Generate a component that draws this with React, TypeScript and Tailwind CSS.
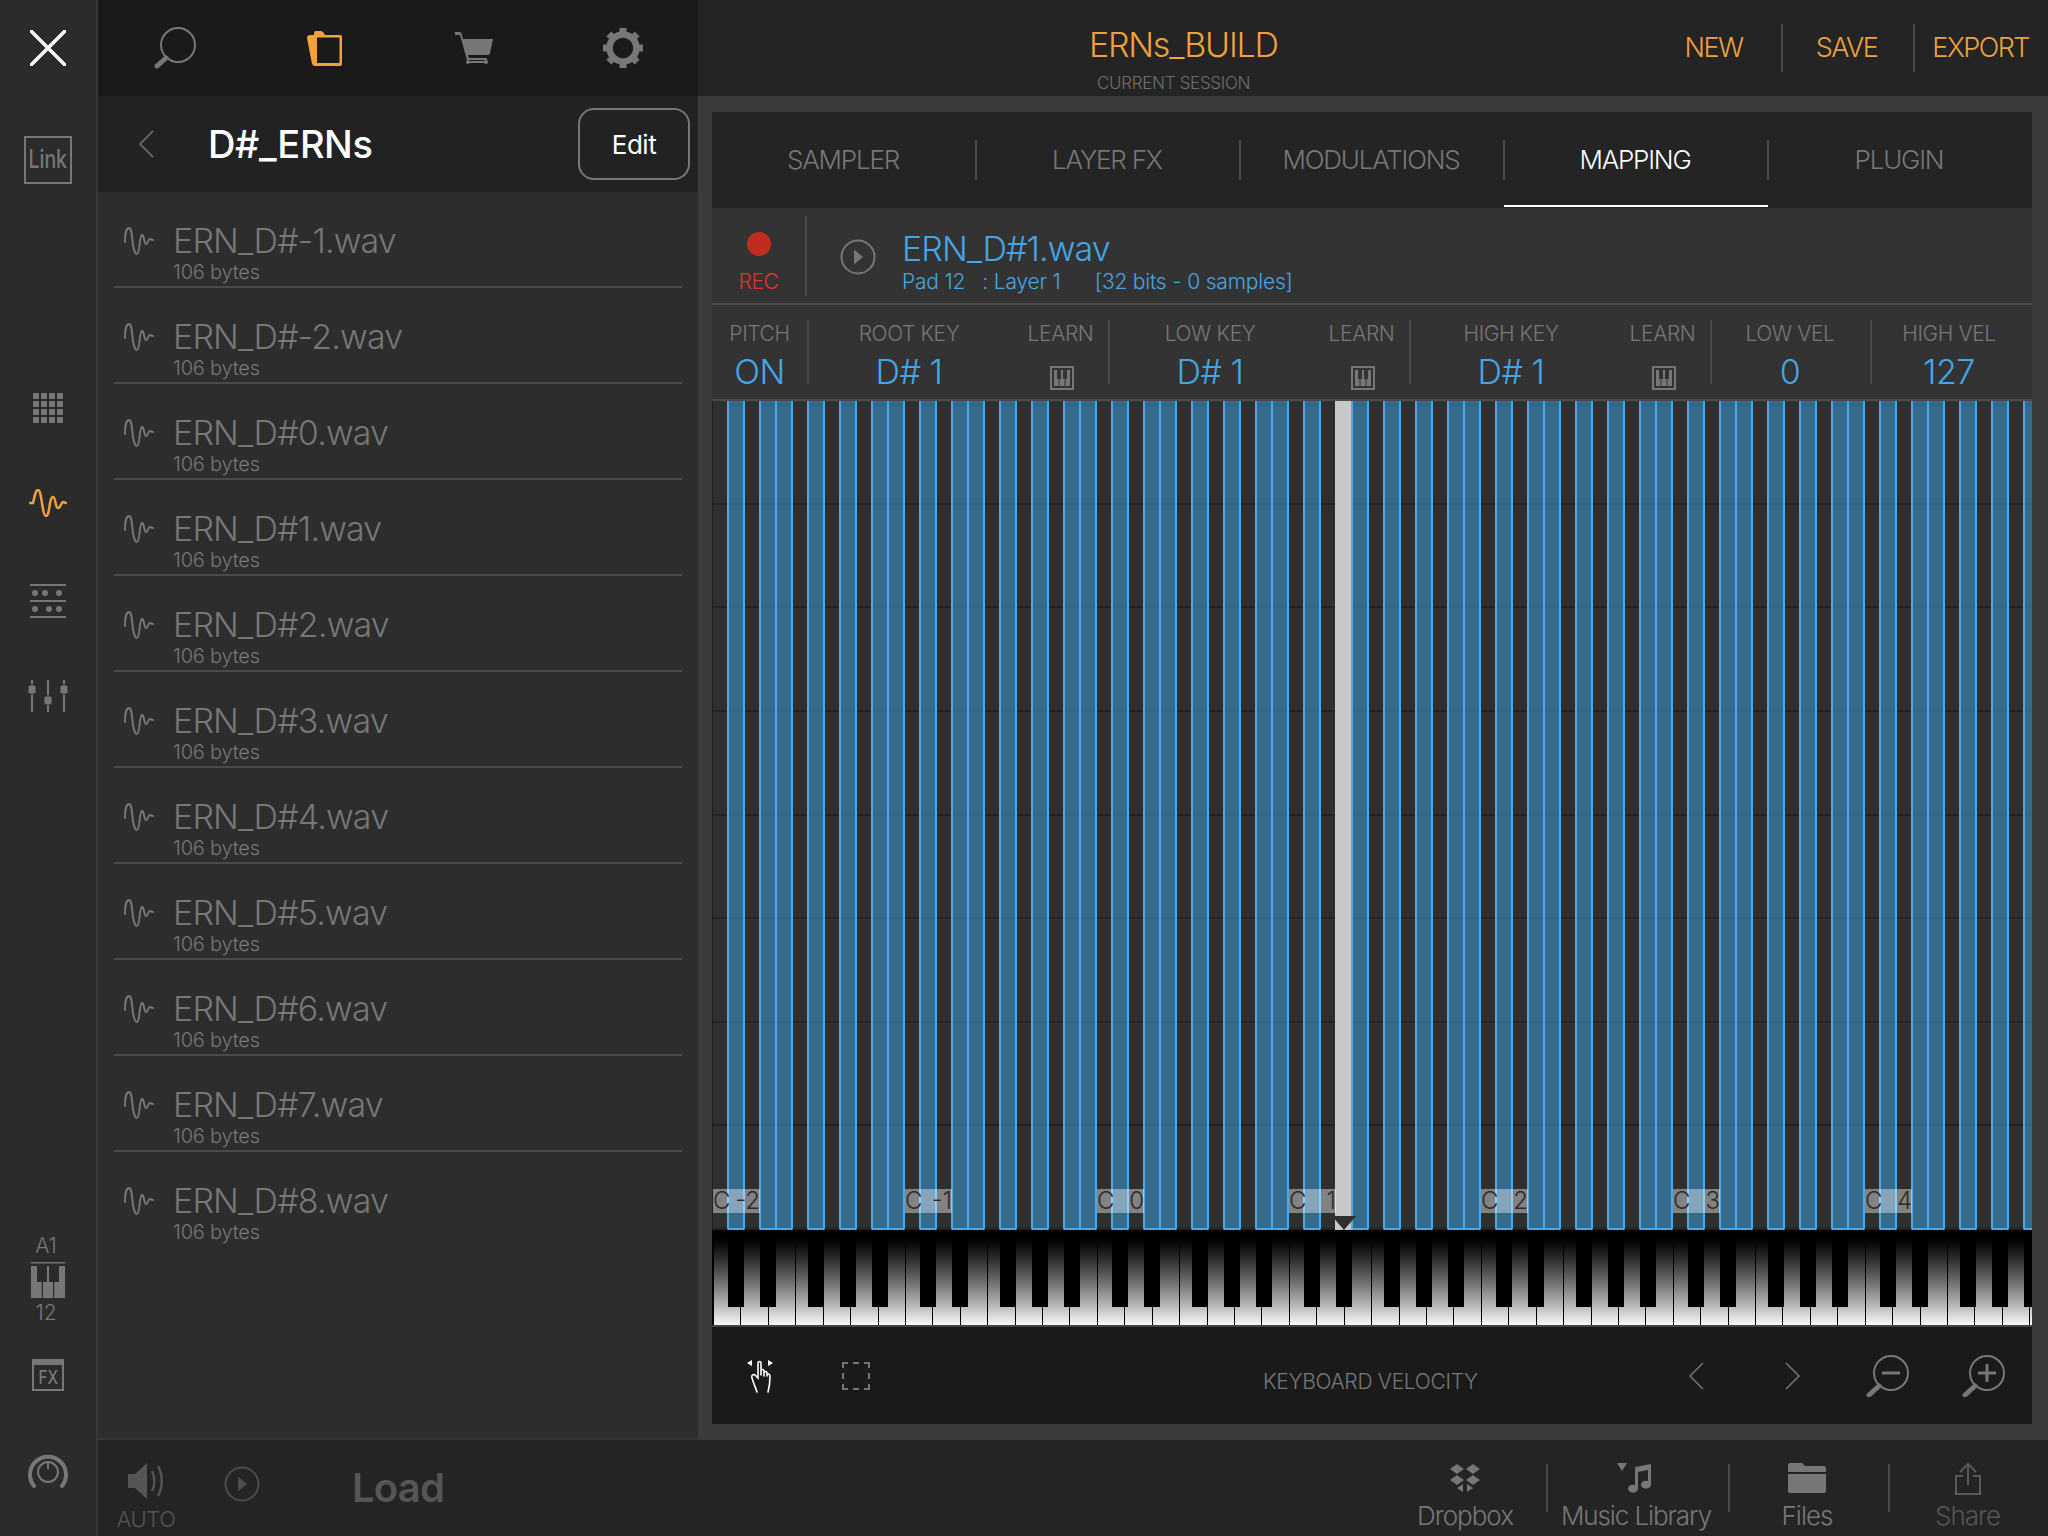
const files = ["ERN_D#-1.wav", "ERN_D#-2.wav", "ERN_D#0.wav", "ERN_D#1.wav", "ERN_D#2.wav", "ERN_D#3.wav", "ERN_D#4.wav", "ERN_D#5.wav", "ERN_D#6.wav", "ERN_D#7.wav", "ERN_D#8.wav"];
const tabs = ["SAMPLER", "LAYER FX", "MODULATIONS", "MAPPING", "PLUGIN"];
const semitones = Array.from({ length: 83 }, (_, i) => i);
const whiteKeys = Array.from({ length: 49 }, (_, i) => i);
const octaves = ["-2", "-1", "0", "1", "2", "3", "4"];
const mapped = [1, 3, 4, 6, 8, 10, 11];
const blacks = [1, 3, 6, 8, 10];

function Wave({ className }: { className: string }) {
  return (
    <svg viewBox="0 0 30 28" fill="none" stroke="currentColor" strokeWidth="2" strokeLinecap="round" className={className}>
      <path d="M1 15C1 5 3 1 5 1C8 1 8 11 9 18C10 24 11 27 13 27C16 27 15 9 18 8C20 7 20 17 22 17C24 17 24 12 26 12C27 12 28 13 29 13" />
    </svg>
  );
}

function MiniKeys({ className }: { className: string }) {
  return (
    <svg viewBox="0 0 24 24" className={className}>
      <rect x="1" y="1" width="22" height="22" fill="none" stroke="#777" strokeWidth="2" />
      <path d="M4 4h16v16H4z" fill="#777" />
      <path d="M7 4h4v9H7zM13 4h4v9h-4z" fill="#333" />
      <path d="M9 13v7M15 13v7" stroke="#333" strokeWidth="1" />
    </svg>
  );
}

function PlayCircle({ color }: { color: string }) {
  return (
    <svg viewBox="0 0 36 36" className="h-9 w-9">
      <circle cx="18" cy="18" r="16.5" fill="none" stroke={color} strokeWidth="2" />
      <path d="M14 10.5l9 7.5-9 7.5z" fill={color} />
    </svg>
  );
}

function Magnifier({ sign }: { sign?: "minus" | "plus" }) {
  return (
    <svg viewBox="0 0 44 42" className="h-[42px] w-11" fill="none">
      <circle cx="25" cy="18" r="17" stroke="#777" strokeWidth="2" />
      {sign && <path d="M16 18h18" stroke="#777" strokeWidth="3" />}
      {sign === "plus" && <path d="M25 9v18" stroke="#777" strokeWidth="3" />}
      <path d="M13 31L3 40" stroke="#777" strokeWidth="5" strokeLinecap="round" />
    </svg>
  );
}

function Gear() {
  return (
    <svg viewBox="0 0 40 40" className="h-10 w-10">
      <circle cx="20" cy="20" r="13.5" fill="none" stroke="#777" strokeWidth="6.5" />
      {[0, 45, 90, 135, 180, 225, 270, 315].map((deg) => (
        <rect key={deg} x="16.5" y="0" width="7" height="6" fill="#777" transform={`rotate(${deg} 20 20)`} />
      ))}
    </svg>
  );
}

function Chevron({ dir, className }: { dir: "left" | "right"; className: string }) {
  return (
    <svg viewBox="0 0 15 28" fill="none" stroke="#777" strokeWidth="1.5" className={className}>
      <path d={dir === "left" ? "M14 1L1 14l13 13" : "M1 1l13 13L1 27"} />
    </svg>
  );
}

function RailIcon({ children, className }: { children: React.ReactNode; className: string }) {
  return <div className={`flex justify-center ${className}`}>{children}</div>;
}

function ParamCol({ label, value, className }: { label: string; value?: string; className: string }) {
  return (
    <div className={`flex shrink-0 flex-col items-center ${className}`}>
      <span className="mt-[16px] text-[21px] leading-[26px] font-light tracking-[-0.4px] text-[#777]">{label}</span>
      {value ? (
        <span className="mt-[5px] text-[34px] leading-[40px] font-light tracking-[-0.5px] text-[#45a6e6]">{value}</span>
      ) : (
        <div className="mt-[19px] ml-0.5">
          <MiniKeys className="h-6 w-6" />
        </div>
      )}
    </div>
  );
}

function KeyParam({ label, value }: { label: string; value: string }) {
  return (
    <>
      <ParamCol label={label} value={value} className="w-[204px] pr-1" />
      <ParamCol label="LEARN" className="w-[95px]" />
      <div className="mt-[15px] h-16 w-0.5 shrink-0 bg-[#4a4a4a]" />
    </>
  );
}

export default function App() {
  return (
    <div className="flex h-[1536px] w-[2048px] overflow-hidden bg-[#3a3a3a] font-['Inter',sans-serif]">
      {/* Left rail */}
      <div className="flex w-[98px] shrink-0 flex-col border-r-2 border-[#383838] bg-[#2b2b2b]">
        <RailIcon className="mt-[30px]">
          <svg viewBox="0 0 36 36" className="h-9 w-9" stroke="#fff" strokeWidth="3.5" strokeLinecap="round">
            <path d="M1 1l34 34M35 1L1 35" />
          </svg>
        </RailIcon>
        <RailIcon className="mt-[70px]">
          <div className="flex h-12 w-12 items-center justify-center border-2 border-[#777] text-[25px] font-medium text-[#777]">
            <span className="inline-block scale-x-[0.78]">Link</span>
          </div>
        </RailIcon>
        <RailIcon className="mt-[209px]">
          <div className="grid grid-cols-4 gap-0.5">
            {Array.from({ length: 16 }, (_, i) => (
              <div key={i} className="h-1.5 w-1.5 rounded-[1px] bg-[#777]" />
            ))}
          </div>
        </RailIcon>
        <RailIcon className="mt-[66px]">
          <svg viewBox="0 0 38 28" fill="none" stroke="#f0a23c" strokeWidth="2.5" strokeLinecap="round" className="h-7 w-[38px]">
            <path d="M1 14h3C6 5 7 1 9 1c4 0 4 26 8 26c4 0 3-19 7-19c3 0 2 11 5 11c3 0 3-6 5-6l3 1" />
          </svg>
        </RailIcon>
        <RailIcon className="mt-[67px]">
          <svg viewBox="0 0 36 34" className="h-[34px] w-9" fill="#777">
            <path d="M0 0h36v2H0zM0 16h36v2H0zM0 32h36v2H0z" />
            <circle cx="5" cy="9" r="3" />
            <circle cx="15" cy="9" r="3" />
            <circle cx="29" cy="9" r="3" />
            <circle cx="5" cy="25" r="3" />
            <circle cx="19" cy="25" r="3" />
            <circle cx="29" cy="25" r="3" />
          </svg>
        </RailIcon>
        <RailIcon className="mt-[62px]">
          <svg viewBox="0 0 40 32" className="h-8 w-10" fill="#777">
            <path d="M3 0h2v32H3zM19 0h2v32h-2zM35 0h2v32h-2z" />
            <rect x="0" y="5" width="8" height="9" rx="2" stroke="#2b2b2b" />
            <rect x="16" y="16" width="8" height="9" rx="2" stroke="#2b2b2b" />
            <rect x="32" y="5" width="8" height="9" rx="2" stroke="#2b2b2b" />
          </svg>
        </RailIcon>
        <div className="mt-[521px] flex flex-col items-center pr-1 text-[21px] leading-[26px] font-light text-[#777]">A1</div>
        <RailIcon className="mt-[3px]">
          <svg viewBox="0 0 34 36" className="h-9 w-[34px]">
            <path d="M0 0h34v1.5H0z" fill="#777" />
            <path d="M0 4h34v32H0z" fill="#777" />
            <path d="M6 4h10v16H6zM18 4h10v16H18z" fill="#2b2b2b" />
            <path d="M10.8 20h1.2v16h-1.2zM22 20h1.2v16H22z" fill="#2b2b2b" />
          </svg>
        </RailIcon>
        <div className="mt-[2px] flex flex-col items-center pr-1 text-[21px] leading-[26px] font-light text-[#777]">12</div>
        <RailIcon className="mt-[33px]">
          <div className="flex h-8 w-8 flex-col border-2 border-[#777]">
            <div className="h-1 bg-[#777]" />
            <div className="flex flex-1 items-center justify-center text-[19px] leading-none font-medium text-[#777]">
              <span className="inline-block scale-x-[0.8]">FX</span>
            </div>
          </div>
        </RailIcon>
        <RailIcon className="mt-[62px]">
          <svg viewBox="0 0 40 36" className="h-9 w-10" fill="none">
            <path d="M6 33A18 18 0 1 1 34 33" stroke="#777" strokeWidth="4" strokeLinecap="round" />
            <circle cx="20" cy="19" r="10" stroke="#777" strokeWidth="2" />
            <path d="M20 9v7" stroke="#777" strokeWidth="2" />
          </svg>
        </RailIcon>
      </div>

      <div className="flex min-w-0 flex-1 flex-col">
        {/* Top row */}
        <div className="flex h-24 shrink-0">
          <div className="flex w-[600px] shrink-0 bg-[#1a1a1a] pl-[2px]">
            <div className="flex w-[150px] items-center justify-center">
              <svg viewBox="0 0 42 42" className="h-[42px] w-[42px]" fill="none">
                <circle cx="24" cy="18" r="17" stroke="#777" strokeWidth="2" />
                <path d="M12 31L3 39" stroke="#777" strokeWidth="5" strokeLinecap="round" />
              </svg>
            </div>
            <div className="flex w-[150px] items-center justify-center">
              <svg viewBox="0 0 35 35" className="h-[35px] w-[35px]">
                <path d="M1 5Q0 5 0 7L5 33Q6 35 8 35H33Q35 35 35 33V6Q35 4 33 4H18L16 1Q15 0 13 0H9Q7 0 7 2V4H2Z" fill="#f0a23c" />
                <rect x="10" y="6.5" width="22.5" height="25.5" fill="#1a1a1a" />
              </svg>
            </div>
            <div className="flex w-[150px] items-center justify-center">
              <svg viewBox="0 0 38 32" className="h-8 w-[38px]" fill="#777">
                <path d="M0 0h4.5q1.5 0 2 1.5L8 7h30l-3 14q-.5 2-2 2H13l.8 3H32v2H12L5 3H0z" />
                <circle cx="13" cy="30" r="2" />
                <circle cx="31" cy="30" r="2" />
                <path d="M13 29h18v2H13z" />
              </svg>
            </div>
            <div className="flex w-[150px] items-center justify-center">
              <Gear />
            </div>
          </div>
          <div className="relative flex min-w-0 flex-1 items-center bg-[#242424]">
            <div className="absolute top-[23px] left-[391px] text-[34px] leading-[44px] font-light tracking-[-1.25px] text-[#f0a23c]">ERNs_BUILD</div>
            <div className="absolute top-[72px] left-[399px] text-[17px] leading-[22px] font-light tracking-[-0.3px] text-[#6e6e6e]">CURRENT SESSION</div>
            <div className="ml-auto flex items-center">
              <span className="text-[27px] font-light tracking-[-1.5px] text-[#f0a23c]">NEW</span>
              <div className="mr-[33px] ml-[38px] h-12 w-0.5 bg-[#4a4a4a]" />
              <span className="text-[27px] font-light tracking-[-1.5px] text-[#f0a23c]">SAVE</span>
              <div className="mr-[17px] ml-9 h-12 w-0.5 bg-[#4a4a4a]" />
              <span className="mr-[19px] text-[27px] font-light tracking-[-1.5px] text-[#f0a23c]">EXPORT</span>
            </div>
          </div>
        </div>

        {/* Middle row */}
        <div className="flex h-[1344px] shrink-0">
          {/* Browser */}
          <div className="flex w-[600px] shrink-0 flex-col">
            <div className="flex h-24 shrink-0 items-center bg-[#222]">
              <Chevron dir="left" className="ml-[41px] h-7 w-[15px]" />
              <span className="ml-[54px] text-[38px] font-medium tracking-[-0.4px] text-white">D#_ERNs</span>
              <button className="mr-2 ml-auto flex h-[72px] w-[112px] items-center justify-center rounded-[16px] border-2 border-[#777] text-[26px] font-normal tracking-[-0.5px] text-white">Edit</button>
            </div>
            <div className="flex flex-1 flex-col border-b-2 border-[#353535] bg-[#2d2d2d]">
              {files.map((f, i) => (
                <div key={f} className={`ml-4 flex h-24 w-[568px] shrink-0 pl-[10px] ${i < files.length - 1 ? "border-b-2 border-[#4a4a4a]" : ""}`}>
                  <Wave className="mt-[35px] h-7 w-[30px] text-[#777]" />
                  <div className="ml-[19px] flex flex-col">
                    <span className="mt-[28px] text-[34px] leading-[42px] font-light tracking-[-0.85px] text-[#777]">{f}</span>
                    <span className="-mt-[3px] text-[20px] leading-[26px] font-light tracking-[-0.2px] text-[#777]">106 bytes</span>
                  </div>
                </div>
              ))}
            </div>
          </div>

          {/* Main panel */}
          <div className="flex min-w-0 flex-1 flex-col pt-4 pr-4 pb-4 pl-[14px]">
            <div className="flex h-24 shrink-0 items-center bg-[#242424]">
              {tabs.map((t, i) => (
                <div key={t} className={`relative flex h-full w-[264px] items-center justify-center pr-0.5 pb-0.5 text-[26px] font-light tracking-[-1.2px] ${t === "MAPPING" ? "text-white" : "text-[#777]"}`}>
                  {t}
                  {i < tabs.length - 1 && <div className="absolute top-[28px] right-[-1px] h-10 w-0.5 bg-[#4a4a4a]" />}
                  {t === "MAPPING" && <div className="absolute right-0 bottom-px left-0 h-0.5 bg-white" />}
                </div>
              ))}
            </div>

            <div className="flex h-[97px] shrink-0 border-b-2 border-[#4a4a4a] bg-[#333]">
              <div className="flex w-[93px] flex-col items-center">
                <div className="mt-6 h-6 w-6 rounded-full bg-[#c22c1e]" />
                <span className="mt-[13px] text-[21px] leading-[26px] font-light tracking-[-0.4px] text-[#e8302a]">REC</span>
              </div>
              <div className="mt-2 h-20 w-0.5 bg-[#4a4a4a]" />
              <div className="mt-[31px] ml-[33px]">
                <PlayCircle color="#777" />
              </div>
              <div className="ml-[26px] flex flex-col">
                <span className="mt-[19px] text-[34px] leading-[44px] font-light tracking-[-0.9px] text-[#45a6e6]">ERN_D#1.wav</span>
                <span className="-mt-[2px] text-[21px] leading-[26px] font-light tracking-[-0.2px] whitespace-pre text-[#45a6e6]">{"Pad 12   : Layer 1      [32 bits - 0 samples]"}</span>
              </div>
            </div>

            <div className="flex h-24 shrink-0 border-b-2 border-[#4a4a4a] bg-[#333]">
              <ParamCol label="PITCH" value="ON" className="w-[95px]" />
              <div className="mt-[15px] h-16 w-0.5 shrink-0 bg-[#4a4a4a]" />
              <KeyParam label="ROOT KEY" value="D# 1" />
              <KeyParam label="LOW KEY" value="D# 1" />
              <KeyParam label="HIGH KEY" value="D# 1" />
              <ParamCol label="LOW VEL" value="0" className="w-[158px] pr-0.5" />
              <div className="mt-[15px] h-16 w-0.5 shrink-0 bg-[#4a4a4a]" />
              <ParamCol label="HIGH VEL" value="127" className="w-[154px]" />
            </div>

            {/* Note grid */}
            <div className="relative h-[829px] shrink-0 overflow-hidden border-l border-[#1e1e1e] bg-[#2f2f2f]">
              <div className="absolute inset-0 flex flex-col">
                {Array.from({ length: 8 }, (_, i) => (
                  <div key={i} className="flex-1 border-b-2 border-[#232323]" />
                ))}
              </div>
              <div className="relative flex h-full">
                {semitones.map((i) => (
                  <div key={i} className="w-4 shrink-0">
                    {i === 39 ? (
                      <div className="-ml-[2px] h-full w-[18px] bg-[#c8c8c8]" />
                    ) : mapped.includes(i % 12) ? (
                      <div className="-ml-[2px] h-full w-[18px] rounded-b-[2px] border-x-2 border-b-2 border-[#4aa9ea] bg-[#3685b4]/70" />
                    ) : null}
                  </div>
                ))}
              </div>
              <div className="absolute right-0 bottom-[17px] left-0 flex">
                {octaves.map((o) => (
                  <div key={o} className="w-48 shrink-0">
                    <div className="flex h-6 w-[47px] items-center justify-between bg-white/40 text-[24px] leading-6 font-light text-[#2a2a2a]">
                      <span>C</span>
                      <span>{o}</span>
                    </div>
                  </div>
                ))}
              </div>
              <svg viewBox="0 0 24 14" className="absolute bottom-0 left-[619px] h-[14px] w-6">
                <path d="M0 0h24L12 14z" fill="#2f2f2f" />
              </svg>
            </div>

            {/* Keyboard */}
            <div className="relative flex h-[97px] shrink-0 overflow-hidden border-b-2 border-[#444] bg-black pl-[2px]">
              {whiteKeys.map((i) => (
                <div key={i} className="h-full w-[27.43px] shrink-0 border-r-[1.5px] border-black bg-linear-to-b from-black to-[#fafafa]" />
              ))}
              <div className="absolute top-0 left-0 flex h-[77px]">
                {semitones.map((i) => (
                  <div key={i} className={`w-4 shrink-0 ${blacks.includes(i % 12) ? "bg-black" : ""}`} />
                ))}
              </div>
            </div>

            {/* Toolbar */}
            <div className="flex flex-1 items-center bg-[#1a1a1a]">
              <svg viewBox="0 0 28 34" className="ml-[34px] h-[34px] w-7" fill="none" stroke="#fff" strokeWidth="1.6" strokeLinecap="round">
                <path d="M1 4l5-3v6zM27 4l-5-3v6z" fill="#fff" stroke="none" />
                <path d="M12 16V4c0-2 3-2 3 0v12M15 12c0-2 3-2 3 0v5M18 14c0-2 3-2 3 0v3M21 16c0-2 3-1 3 1c0 7 0 9-2 16M12 16v3l-3-3c-2-1-4 0-3 3c1 4 3 8 5 14" />
              </svg>
              <div className="ml-[68px] h-7 w-7 border-2 border-dashed border-[#777]" />
              <span className="mt-3 ml-[393px] text-[21px] font-light tracking-[-0.3px] text-[#777]">KEYBOARD VELOCITY</span>
              <Chevron dir="left" className="ml-[211px] h-7 w-[15px]" />
              <Chevron dir="right" className="ml-[81px] h-7 w-[15px]" />
              <div className="ml-[66px]">
                <Magnifier sign="minus" />
              </div>
              <div className="ml-[52px]">
                <Magnifier sign="plus" />
              </div>
            </div>
          </div>
        </div>

        {/* Bottom bar */}
        <div className="relative flex h-24 shrink-0 bg-[#242424]">
          <div className="ml-[30px] flex w-[36px] flex-col items-center">
            <svg viewBox="0 0 38 36" className="mt-[23px] h-9 w-[38px] shrink-0">
              <path d="M1 11h7l12-11v36L8 25H1z" fill="#555" />
              <path d="M25 8c3 6 3 14 0 20M31 3c5 9 5 21 0 30" fill="none" stroke="#555" strokeWidth="2.5" />
            </svg>
            <span className="mt-[6px] text-[22px] leading-[28px] font-light tracking-[-0.4px] text-[#555]">AUTO</span>
          </div>
          <div className="mt-[26px] ml-[60px]">
            <PlayCircle color="#4c4c4c" />
          </div>
          <span className="mt-[24px] ml-[92px] text-[40px] leading-[48px] font-semibold tracking-[-0.8px] text-[#555]">Load</span>

          <div className="ml-auto flex">
            <div className="flex w-[164px] flex-col items-center pl-[2px]">
              <svg viewBox="0 0 32 30" className="mt-[23px] h-[30px] w-8 shrink-0" fill="#777">
                <path d="M8 1l7 5-7 5-7-5zM24 1l7 5-7 5-7-5zM8 12l7 5-7 5-7-5zM24 12l7 5-7 5-7-5z" />
                <path d="M14 21v8l-6-4zM18 21v8l6-4z" />
              </svg>
              <span className="mt-[7px] text-[26px] leading-[32px] font-light tracking-[-1px] text-[#777]">Dropbox</span>
            </div>
            <div className="mt-6 h-12 w-0.5 bg-[#4a4a4a]" />
            <div className="flex w-[180px] flex-col items-center pr-1">
              <svg viewBox="0 0 38 30" className="mt-[23px] h-[30px] w-[38px] shrink-0" fill="#777">
                <path d="M0 0h10l-5 8z" />
                <path d="M18 4l16-3v21a5 4 0 1 1-3-4V7l-10 2v17a5 4 0 1 1-3-4z" />
              </svg>
              <span className="mt-[7px] text-[26px] leading-[32px] font-light tracking-[-1.1px] whitespace-nowrap text-[#777]">Music Library</span>
            </div>
            <div className="mt-6 h-12 w-0.5 bg-[#4a4a4a]" />
            <div className="flex w-[158px] flex-col items-center pr-1">
              <svg viewBox="0 0 38 30" className="mt-[23px] h-[30px] w-[38px] shrink-0" fill="#777">
                <path d="M2 0h12l3 3h19c1 0 2 1 2 2v4H0V2c0-1 1-2 2-2zM0 11h38v17c0 1-1 2-2 2H2c-1 0-2-1-2-2z" />
              </svg>
              <span className="mt-[7px] text-[26px] leading-[32px] font-light tracking-[-1px] text-[#777]">Files</span>
            </div>
            <div className="mt-6 h-12 w-0.5 bg-[#4a4a4a]" />
            <div className="flex w-[158px] flex-col items-center pr-[3px]">
              <svg viewBox="0 0 28 32" className="mt-[23px] h-8 w-7 shrink-0" fill="none" stroke="#5a5a5a" strokeWidth="2">
                <path d="M14 22V2M6 9l8-8 8 8" />
                <path d="M9 13H2v18h24V13h-7" />
              </svg>
              <span className="mt-[5px] text-[26px] leading-[32px] font-light tracking-[-1px] text-[#555]">Share</span>
            </div>
          </div>
        </div>
      </div>
    </div>
  );
}
